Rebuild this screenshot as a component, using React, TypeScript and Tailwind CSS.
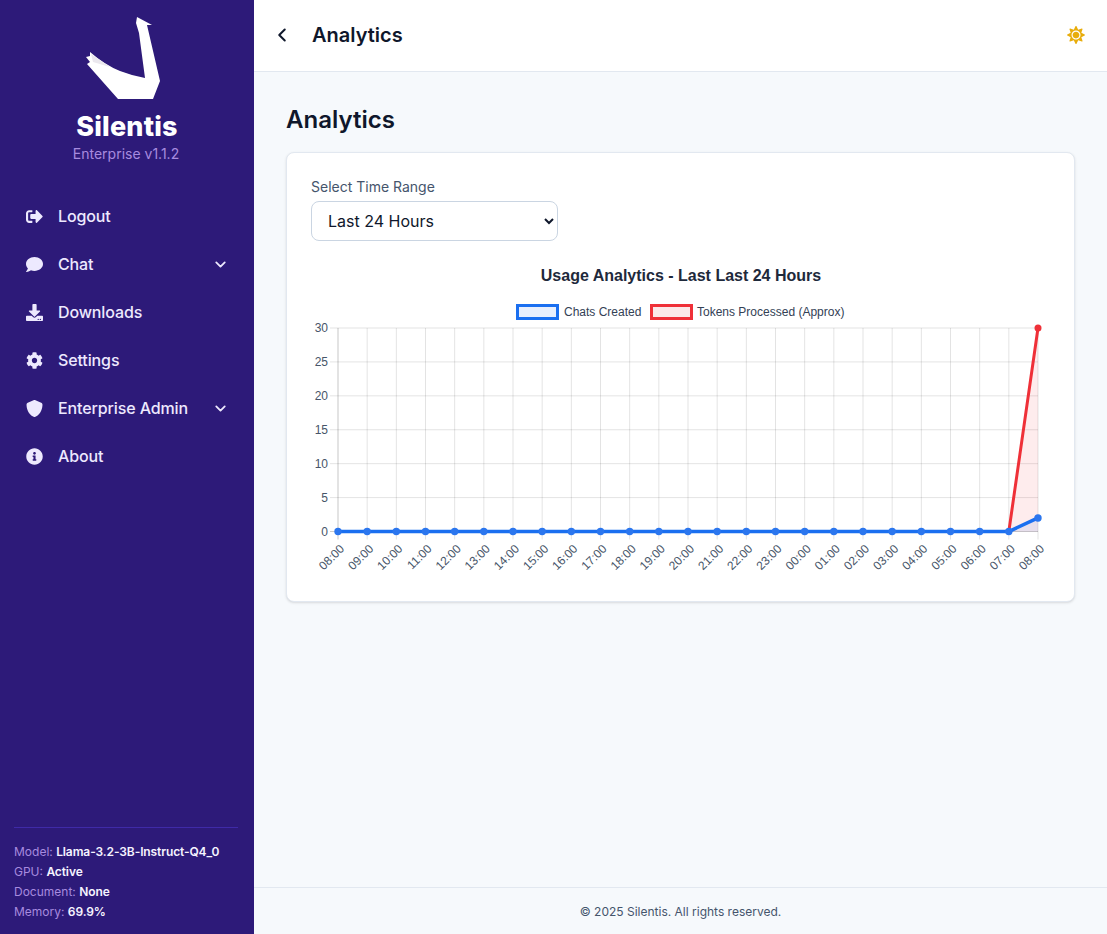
import { ChevronLeft, ChevronDown } from "lucide-react";
import { FaSignOutAlt, FaComment, FaDownload, FaCog, FaInfoCircle, FaSun } from "react-icons/fa";
import { FaShield } from "react-icons/fa6";

const navItems = [
  { label: "Logout", icon: FaSignOutAlt },
  { label: "Chat", icon: FaComment, caret: true },
  { label: "Downloads", icon: FaDownload },
  { label: "Settings", icon: FaCog },
  { label: "Enterprise Admin", icon: FaShield, caret: true },
  { label: "About", icon: FaInfoCircle },
];

const stats = [
  ["Model:", "Llama-3.2-3B-Instruct-Q4_0"],
  ["GPU:", "Active"],
  ["Document:", "None"],
  ["Memory:", "69.9%"],
];

const hours = ["08", "09", "10", "11", "12", "13", "14", "15", "16", "17", "18", "19", "20", "21", "22", "23", "00", "01", "02", "03", "04", "05", "06", "07", "08"];

const X0 = 338;
const STEP = 700 / 24;
const Y0 = 531.5;
const Y30 = 328;
const xAt = (i: number) => X0 + i * STEP;
const yAt = (v: number) => Y0 - ((Y0 - Y30) * v) / 30;

function Swan() {
  return (
    <svg viewBox="85 14 84 88" className="w-[84px] h-[88px]">
      <path
        fill="#ffffff"
        d="M137 17 L152 25 L147 25 L160 81 L153 99 L118 99 L87 64 L90 62 L86 57 L90 56 L90 52 Q105 65 120 71 Q133 76 145 78 L139 33 L136 23 Z"
      />
      <path fill="#ebe8ee" d="M91 54 L110 67 L93 62 Z" />
    </svg>
  );
}

function UsageChart() {
  return (
    <svg viewBox="311 256 740 321" className="w-[740px] h-[321px] mt-[15px] block" style={{ fontFamily: "'Liberation Sans', Arial, sans-serif" }}>
      <text x="681" y="281" textAnchor="middle" fontSize="16" fontWeight="700" fill="#1e293b">Usage Analytics - Last Last 24 Hours</text>

      <rect x="517.5" y="305.5" width="40" height="13" fill="#e8effd" stroke="#1a6ff0" strokeWidth="3" />
      <text x="564" y="316" fontSize="12" fill="#334155">Chats Created</text>
      <rect x="651.5" y="305.5" width="40" height="13" fill="#fbe9e9" stroke="#ef3038" strokeWidth="3" />
      <text x="697" y="316" fontSize="12" fill="#334155">Tokens Processed (Approx)</text>

      {[0, 5, 10, 15, 20, 25, 30].map((v) => (
        <g key={v}>
          <line x1={X0 - 8} x2={xAt(24)} y1={yAt(v)} y2={yAt(v)} stroke="#000000" strokeOpacity={v === 0 ? 0.2 : 0.11} />
          <text x={X0 - 10} y={yAt(v) + 4} textAnchor="end" fontSize="12" fill="#475569">{v}</text>
        </g>
      ))}
      {hours.map((h, i) => (
        <g key={i}>
          <line x1={xAt(i)} x2={xAt(i)} y1={Y30} y2={Y0 + 8} stroke="#000000" strokeOpacity={i === 0 ? 0.22 : 0.11} />
          <text
            transform={`translate(${xAt(i) + 7} ${Y0 + 18}) rotate(-45)`}
            textAnchor="end"
            fontSize="12"
            fill="#475569"
          >
            {h}:00
          </text>
        </g>
      ))}

      <polygon points={`${xAt(23)},${yAt(0)} ${xAt(24)},${yAt(30)} ${xAt(24)},${yAt(0)}`} fill="#ef3038" fillOpacity="0.09" />
      <polygon points={`${xAt(23)},${yAt(0)} ${xAt(24)},${yAt(2)} ${xAt(24)},${yAt(0)}`} fill="#1a6ff0" fillOpacity="0.1" />

      <polyline points={hours.map((_, i) => `${xAt(i)},${yAt(i === 24 ? 30 : 0)}`).join(" ")} fill="none" stroke="#ef3038" strokeWidth="3" />
      <circle cx={xAt(24)} cy={yAt(30)} r="3.5" fill="#ef3038" />
      <polyline points={hours.map((_, i) => `${xAt(i)},${yAt(i === 24 ? 2 : 0)}`).join(" ")} fill="none" stroke="#1a6ff0" strokeWidth="3.5" />
      {hours.map((_, i) => (
        <circle key={i} cx={xAt(i)} cy={yAt(i === 24 ? 2 : 0)} r="3.7" fill="#2b76ee" />
      ))}
    </svg>
  );
}

export default function App() {
  return (
    <div className="flex h-screen w-full overflow-hidden font-['Inter',sans-serif]">
      <aside className="w-[254px] shrink-0 bg-[#2d1a79] flex flex-col">
        <div className="flex flex-col items-center pt-[14px] h-[192px]">
          <Swan />
          <div className="text-[27px] leading-[34px] font-extrabold text-white mt-[8px] tracking-[0.2px]">Silentis</div>
          <div className="text-sm leading-5 text-[#a78bdf] pr-[2px]">Enterprise v1.1.2</div>
        </div>
        <nav className="flex flex-col">
          {navItems.map(({ label, icon: Icon, caret }) => (
            <div key={label} className="h-12 flex items-center pl-[24px] pr-[25px] text-[#ede9fe]">
              <span className="w-5 flex justify-center mr-[14px]">
                <Icon size={17} />
              </span>
              <span className="flex-1 text-base font-medium tracking-[-0.12px]">{label}</span>
              {caret && <ChevronDown size={17} strokeWidth={2.5} />}
            </div>
          ))}
        </nav>
        <div className="mt-auto ml-[14px] mr-[16px] border-t border-[#3f2aa8] pt-[14px] pb-[12px] text-xs">
          {stats.map(([k, v]) => (
            <div key={k} className="h-5 leading-5 text-[#a78bdf]">
              {k} <span className="font-semibold tracking-[-0.1px] text-[#f5f3ff]">{v}</span>
            </div>
          ))}
        </div>
      </aside>

      <div className="flex-1 flex flex-col bg-[#f6f9fc] min-w-0">
        <header className="h-[72px] shrink-0 bg-white border-b border-slate-200 flex items-center pl-[17px] pr-[22px] pb-[2px]">
          <ChevronLeft size={22} strokeWidth={2.2} className="text-slate-900" />
          <h1 className="ml-[19px] text-xl font-semibold text-slate-900">Analytics</h1>
          <FaSun size={18} className="ml-auto text-[#e8ad0c]" />
        </header>

        <main className="flex-1 px-8 pt-8">
          <h2 className="text-2xl font-semibold text-slate-900 mb-4">Analytics</h2>
          <section className="bg-white border border-slate-200 rounded-lg shadow-sm p-6">
            <label className="block text-sm leading-5 text-slate-600 mb-[4px]">Select Time Range</label>
            <select className="block w-[247px] h-10 px-3 bg-white border border-slate-300 rounded-lg text-base text-slate-900">
              <option>Last 24 Hours</option>
              <option>Last 7 Days</option>
              <option>Last 30 Days</option>
            </select>
            <UsageChart />
          </section>
        </main>

        <footer className="h-[47px] shrink-0 border-t border-slate-200 flex items-center justify-center pt-[2px] text-xs text-slate-600">
          © 2025 Silentis. All rights reserved.
        </footer>
      </div>
    </div>
  );
}
